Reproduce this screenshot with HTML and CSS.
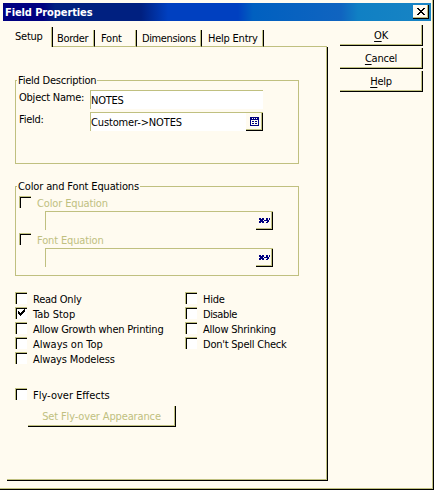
FILE: index.html
```html
<!DOCTYPE html>
<html lang="en">
<head>
<meta charset="utf-8">
<title>Field Properties</title>
<link rel="stylesheet" href="styles.css">
</head>
<body>
<div class="window">
  <header class="titlebar">
    <span class="title">Field Properties</span>
    <button class="close" aria-label="Close"><svg width="8" height="7" viewBox="0 0 8 7" shape-rendering="crispEdges"><path d="M0 0h2v1h1v1h2v-1h1v-1h2v1h-1v1h-1v1h-1v1h1v1h1v1h1v1h-2v-1h-1v-1h-2v1h-1v1h-2v-1h1v-1h1v-1h1v-1h-1v-1h-1v-1h-1z"/></svg></button>
  </header>
  <div class="content">
    <main class="notebook">
      <nav class="tabs">
        <span class="tab active">Setup</span>
        <span class="tab t-border">Border</span>
        <span class="tab t-font">Font</span>
        <span class="tab t-dim">Dimensions</span>
        <span class="tab t-help">Help Entry</span>
      </nav>
      <section class="page">
        <div class="group description">
          <span class="legend">Field Description</span>
          <div class="row"><label>Object Name:</label><div class="input">NOTES</div></div>
          <div class="row"><label>Field:</label><div class="input"><span class="wide">Customer-&gt;NOTES</span>
            <button class="mini" aria-label="Choose field"><svg width="9" height="9" viewBox="0 0 9 9" shape-rendering="crispEdges"><path fill="#000080" d="M0 0h9v9h-9z"/><path fill="#fffbf0" d="M2 1h1v1h-1zM4 1h1v1h-1zM6 1h1v1h-1zM1 3h7v5h-7z"/><path fill="#000080" d="M2 4h2v1h-2zM5 4h2v1h-2zM2 6h2v1h-2zM5 6h2v1h-2z"/></svg></button></div></div>
        </div>
        <div class="group equations">
          <span class="legend wide">Color and Font Equations</span>
          <div class="equation"><div class="check off"><i class="box"></i><span class="wide">Color Equation</span></div>
            <div class="input off"><button class="mini" aria-label="Edit equation"><svg width="11" height="5" viewBox="0 0 11 5" shape-rendering="crispEdges"><path fill="#000080" d="M0 0h2v1h1v-1h2v2h-1v1h1v2h-2v-1h-1v1h-2v-2h1v-1h-1zM5 2h2v1h-2zM7 0h2v2h1v-2h1v2h-1v2h-1v1h-2v-1h1v-1h-1z"/></svg></button></div></div>
          <div class="equation"><div class="check off"><i class="box"></i><span class="wide">Font Equation</span></div>
            <div class="input off"><button class="mini" aria-label="Edit equation"><svg width="11" height="5" viewBox="0 0 11 5" shape-rendering="crispEdges"><path fill="#000080" d="M0 0h2v1h1v-1h2v2h-1v1h1v2h-2v-1h-1v1h-2v-2h1v-1h-1zM5 2h2v1h-2zM7 0h2v2h1v-2h1v2h-1v2h-1v1h-2v-1h1v-1h-1z"/></svg></button></div></div>
        </div>
        <div class="options">
          <div class="column">
            <div class="check"><i class="box"></i><span>Read Only</span></div>
            <div class="check"><i class="box"><svg width="7" height="7" viewBox="0 0 7 7" shape-rendering="crispEdges"><path d="M0 2h1v1h1v1h1v-1h1v-1h1v-1h1v-1h1v3h-1v1h-1v1h-1v1h-1v1h-1v-1h-1v-1h-1z"/></svg></i><span class="wider">Tab Stop</span></div>
            <div class="check"><i class="box"></i><span>Allow Growth when Printing</span></div>
            <div class="check"><i class="box"></i><span class="wider">Always on Top</span></div>
            <div class="check"><i class="box"></i><span class="wide">Always Modeless</span></div>
          </div>
          <div class="column">
            <div class="check"><i class="box"></i><span>Hide</span></div>
            <div class="check"><i class="box"></i><span class="tight">Disable</span></div>
            <div class="check"><i class="box"></i><span>Allow Shrinking</span></div>
            <div class="check"><i class="box"></i><span>Don't Spell Check</span></div>
          </div>
        </div>
        <div class="check flyover"><i class="box"></i><span class="wider">Fly-over Effects</span></div>
        <button class="button appearance wide" disabled>Set Fly-over Appearance</button>
      </section>
    </main>
    <aside class="actions">
      <button class="button"><u>O</u>K</button>
      <button class="button"><u>C</u>ancel</button>
      <button class="button"><u>H</u>elp</button>
    </aside>
  </div>
</div>
</body>
</html>
```
FILE: styles.css
```css
* { box-sizing: border-box; }
:root { --face: #fffbf0; --shade: #c0c080; }
body { margin: 0; background: var(--face); color: #000; font: 11px/13px "DejaVu Sans Condensed", "DejaVu Sans", sans-serif; font-stretch: condensed; letter-spacing: -0.23px; white-space: nowrap; }
button { margin: 0; padding: 0; background: var(--face); color: inherit; font: inherit; letter-spacing: inherit; border: 0; border-radius: 0; }
svg { display: block; }
.wide { letter-spacing: -0.14px; }
.wider { letter-spacing: 0; }
.tight { letter-spacing: -0.4px; }
.window { width: 434px; height: 490px; padding: 3px 1px 0 3px; border-right: 1px solid #000; border-bottom: 1px solid #000; box-shadow: inset -1px -1px var(--shade); }
.titlebar { display: flex; align-items: center; justify-content: space-between; width: 428px; height: 18px; padding: 0 2px; background: linear-gradient(90deg, #000080 0, #000080 40px, #002080 52px, #002080 138px, #0040c0 165px, #0040c0 235px, #0060c0 250px, #1064c0 338px, #1080c4 355px, #1884c4 100%); color: #fff; }
.title { font-weight: bold; letter-spacing: -0.1px; }
.close { display: flex; align-items: center; justify-content: center; width: 16px; height: 14px; border-right: 1px solid #000; border-bottom: 1px solid #000; box-shadow: inset -1px -1px var(--shade); }
.content { display: flex; }
.notebook { width: 325px; padding: 6px 0 0 4px; }
.tabs { display: flex; width: 320px; height: 20px; align-items: flex-end; }
.tabs::after { content: ""; flex: 1; border-bottom: 1px solid var(--shade); }
.tab { flex: none; height: 17px; padding: 2px 0 0 4px; border-right: 1px solid #000; border-bottom: 1px solid var(--shade); box-shadow: inset -1px 0 var(--shade); }
.tab.active { width: 46px; height: 20px; padding: 3px 0 0 8px; border-bottom: 0; }
.t-border { width: 42px; letter-spacing: -0.3px; }
.t-font { width: 42px; padding-left: 6px; }
.t-dim { width: 65px; padding-left: 5px; letter-spacing: -0.4px; }
.t-help { width: 62px; padding-left: 6px; }
.page { height: 434px; width: 321px; padding: 33px 0 0 8px; border-right: 1px solid #000; border-bottom: 1px solid #000; box-shadow: inset -1px -1px var(--shade); }
.group { width: 284px; border: 1px solid var(--shade); }
.legend { display: block; width: max-content; height: 13px; margin: -7px 0 0 1px; padding: 0 1px; background: var(--face); }
.description { height: 84px; }
.row { display: flex; height: 22px; padding-left: 3px; }
.legend + .row { margin-top: 3px; }
.row label { width: 71px; padding-top: 1px; }
.input { display: flex; justify-content: space-between; width: 173px; height: 19px; padding: 3px 0 0 0; border: solid var(--shade); border-width: 1px 0 0 1px; background: #fff; }
.mini { display: flex; align-items: center; justify-content: center; width: 17px; height: 18px; margin-top: -3px; border-right: 1px solid #000; border-bottom: 1px solid #000; box-shadow: inset -1px -1px var(--shade); }
.equations { height: 90px; margin-top: 22px; }
.equation { height: 37px; padding-left: 3px; }
.legend + .equation { margin-top: 3px; }
.check { display: flex; height: 15px; }
.check span { margin-left: 6px; padding-top: 1px; }
.box { width: 12px; height: 12px; padding: 1px 0 0 2px; border: solid var(--shade); border-width: 1px 0 0 1px; box-shadow: inset 1px 1px #000; background: #fff; }
.off { color: var(--shade); }
.off .box, .input.off { background: var(--face); }
.input.off { width: 228px; margin-left: 26px; justify-content: flex-end; }
.options { display: flex; margin-top: 16px; height: 96px; }
.column { flex: none; width: 170px; }
.column + .column { width: 140px; }
.button { display: block; width: 83px; height: 21px; border-right: 1px solid #000; border-bottom: 1px solid #000; box-shadow: inset -1px -1px var(--shade); text-align: center; }
.appearance { width: 148px; margin: 3px 0 0 13px; color: var(--shade); }
.actions { display: flex; flex-direction: column; gap: 2px; padding: 4px 0 0 12px; }
.actions u { text-underline-offset: 2px; }
```
